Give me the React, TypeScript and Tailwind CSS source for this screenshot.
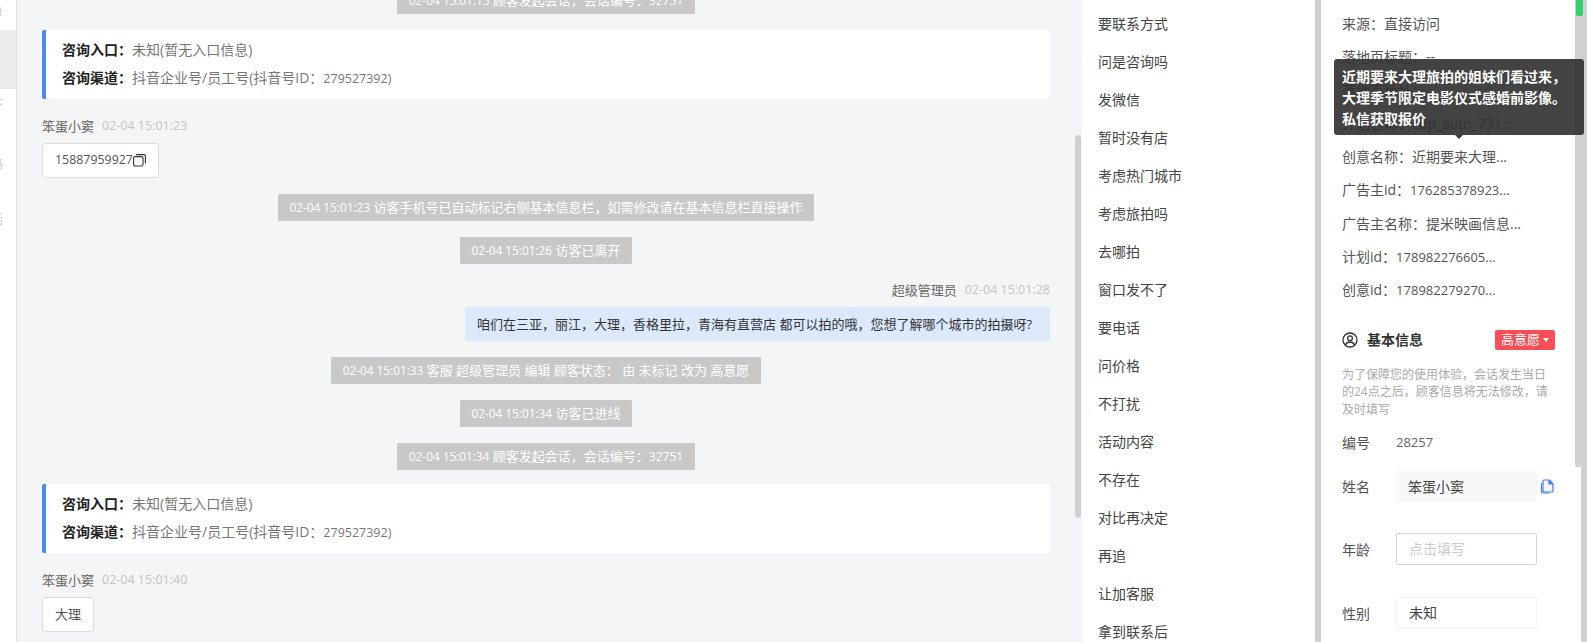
const font = "font-['Open_Sans','Noto_Sans_CJK_SC',sans-serif]";

function Sys({ time, children, last }: { time: string; children: React.ReactNode; last?: boolean }) {
  return (
    <div className={`flex justify-center ${last ? 'mb-[14px]' : 'mb-4'}`}>
      <div className="h-[27px] leading-[27px] px-3 bg-[#c8c8c8] text-white text-[13px] rounded-[1px] whitespace-nowrap">
        <span className="text-[11.8px]">{time}</span> {children}
      </div>
    </div>
  );
}

function Card() {
  return (
    <div className="h-[69px] mb-[17px] bg-white border-l-4 border-[#4d8af0] rounded-[2px] pl-[16px] pt-[6px] text-[14px] leading-[28px] text-[#777]">
      <div><span className="font-bold text-[#222]">咨询入口：</span>未知(暂无入口信息)</div>
      <div>
        <span className="font-bold text-[#222]">咨询渠道：</span>抖音企业号/员工号(抖音号ID：<span className="text-[12.5px]">279527392)</span>
      </div>
    </div>
  );
}

function Meta({ name, time, right }: { name: string; time: string; right?: boolean }) {
  return (
    <div className={`flex gap-2 text-[13px] h-[20px] leading-[20px] mb-[7px] ${right ? 'justify-end mb-[6px]' : ''}`}>
      <span className="text-[#666]">{name}</span>
      <span className="text-[#c4c4c4] text-[12.5px]">{time}</span>
    </div>
  );
}

function Bubble({ children }: { children: React.ReactNode }) {
  return (
    <div className="inline-flex items-center h-[35px] px-[12px] bg-white border border-[#dcdcdc] rounded-[3px] text-[13px] text-[#555]">{children}</div>
  );
}

const CopyIcon = () => (
  <svg width="13" height="13" viewBox="0 0 13 13" fill="none" stroke="#333" strokeWidth="1.1" className="shrink-0">
    <rect x="0.6" y="2.6" width="9.4" height="9.4" rx="1.5" />
    <path d="M3 .6h8a1.4 1.4 0 0 1 1.4 1.4v7.600" />
  </svg>
);

const words = ['要联系方式', '问是咨询吗', '发微信', '暂时没有店', '考虑热门城市', '考虑旅拍吗', '去哪拍', '窗口发不了', '要电话', '问价格', '不打扰', '活动内容', '不存在', '对比再决定', '再追', '让加客服', '拿到联系后'];

const info: [string, string, boolean?][] = [
  ['来源：', '直接访问'],
  ['落地页标题：', '--'],
  ['落地页地址：', '--'],
  ['计划名称：', 'cdp_auto_731...'],
  ['创意名称：', '近期要来大理...'],
  ['广告主id：', '176285378923...', true],
  ['广告主名称：', '提米映画信息...'],
  ['计划id：', '178982276605...', true],
  ['创意id：', '178982279270...', true],
];

const labelCls = 'w-[54px] text-[#555]';
const fieldCls = 'w-[141px] pl-3 rounded-[2px]';

export default function App() {
  return (
    <div className={`relative h-[642px] w-[1587px] flex overflow-hidden bg-white ${font}`}>
      {/* left rail */}
      <div className="w-[17px] shrink-0 bg-white border-r border-[#dfe1e5] overflow-hidden">
        <div className="h-[30px] leading-[26px] text-[12px] text-[#ccc] -ml-[9px]">单</div>
        <div className="h-[59px] bg-[#ececec]" />
        <div className="h-[32px] leading-[32px] text-[12px] text-[#ccc] -ml-[9px]">下</div>
        <div className="h-[88px] leading-[88px] text-[12px] text-[#ccc] -ml-[9px]">码</div>
        <div className="h-[22px] leading-[22px] text-[12px] text-[#ccc] -ml-[9px]">话</div>
      </div>

      {/* chat */}
      <div className="relative w-[1065px] shrink-0 bg-[#f4f5f7] overflow-hidden">
        <div className="pl-[25px] w-[1033px] -mt-[13px]">
          <Sys time="02-04 15:01:15">顾客发起会话，会话编号：<span className="text-[12px]">32751</span></Sys>
          <Card />
          <Meta name="笨蛋小窦" time="02-04 15:01:23" />
          <div className="mb-[16px]">
            <Bubble>
              <span className="text-[12.4px]">15887959927</span>
              <CopyIcon />
            </Bubble>
          </div>
          <Sys time="02-04 15:01:23">访客手机号已自动标记右侧基本信息栏，如需修改请在基本信息栏直接操作</Sys>
          <Sys time="02-04 15:01:26">访客已离开</Sys>
          <Meta name="超级管理员" time="02-04 15:01:28" right />
          <div className="flex justify-end mb-4">
            <div className="h-[34px] leading-[34px] pl-3 pr-[18px] bg-[#dce9fd] rounded-[2px] text-[13px] text-[#333] whitespace-nowrap">咱们在三亚，丽江，大理，香格里拉，青海有直营店 都可以拍的哦，您想了解哪个城市的拍摄呀?</div>
          </div>
          <Sys time="02-04 15:01:33">客服 超级管理员 编辑 顾客状态： 由 未标记 改为 高意愿</Sys>
          <Sys time="02-04 15:01:34">访客已进线</Sys>
          <Sys time="02-04 15:01:34" last>顾客发起会话，会话编号：<span className="text-[12px]">32751</span></Sys>
          <Card />
          <Meta name="笨蛋小窦" time="02-04 15:01:40" />
          <Bubble>大理</Bubble>
        </div>
        <div className="absolute left-[1058px] top-[135px] w-[6px] h-[383px] rounded-[3px] bg-[#d0d0d0]" />
      </div>

      {/* quick words */}
      <div className="w-[233px] shrink-0 bg-white pt-[5px] pl-[16px]">
        {words.map((w) => (
          <div key={w} className="h-[38px] leading-[38px] text-[14px] text-[#444] whitespace-nowrap">{w}</div>
        ))}
      </div>

      <div className="w-[6px] shrink-0 bg-[#d0d0d0]" />

      {/* info */}
      <div className="relative w-[254px] shrink-0 bg-white pl-[21px] text-[14px] text-[#555]">
        <div className="pt-[7px]">
          {info.map(([a, b, num]) => (
            <div key={a} className="h-[33.25px] leading-[33px] whitespace-nowrap">
              {a}
              <span className={num ? 'text-[13px]' : ''}>{b}</span>
            </div>
          ))}
        </div>
        <div className="mt-[22.5px] w-[213px] flex items-center justify-between h-[22px]">
          <div className="flex items-center gap-[9px] font-bold text-[14px] text-[#333]">
            <svg width="16" height="16" viewBox="0 0 16 16" fill="none" stroke="#333" strokeWidth="1.3">
              <circle cx="8" cy="8" r="7" />
              <circle cx="8" cy="6.200" r="2.400" />
              <path d="M3.400 13c.8-2 2.600-3 4.600-3s3.800 1 4.600 3" />
            </svg>
            基本信息
          </div>
          <div className="h-[20px] w-[60px] flex items-center justify-center gap-[3px] rounded-[2px] bg-[#f74e57] text-white text-[13px]">
            高意愿
            <span className="w-0 h-0 border-x-[3px] border-x-transparent border-t-[4px] border-t-white" />
          </div>
        </div>
        <div className="mt-[15px] w-[208px] text-[12px] leading-[17.5px] text-[#aaa]">为了保障您的使用体验，会话发生当日的24点之后，顾客信息将无法修改，请及时填写</div>
        <div className="mt-[14px] flex items-center h-[20px]">
          <span className={labelCls}>编号</span>
          <span className="text-[13px] text-[#666]">28257</span>
        </div>
        <div className="mt-[19px] flex items-center h-[31px]">
          <span className={labelCls}>姓名</span>
          <div className={`${fieldCls} h-[31px] leading-[31px] bg-[#f8f8f8] text-[#444]`}>笨蛋小窦</div>
          <svg width="14" height="15" viewBox="0 0 14 15" fill="none" stroke="#4d7ff0" strokeWidth="1.200" className="ml-[3px]">
            <path d="M1.500 4v9a1 1 0 0 0 1 1h7" />
            <path d="M4 1h5.500l3.500 3.500V12a1 1 0 0 1-1 1H4a1 1 0 0 1-1-1V2a1 1 0 0 1 1-1z" fill="#f2f6ff" />
            <path d="M9 1v4h4" fill="#4d7ff0" />
          </svg>
        </div>
        <div className="mt-[31px] flex items-center h-[32px]">
          <span className={labelCls}>年龄</span>
          <div className={`${fieldCls} h-[32px] leading-[30px] border border-[#d5d5d5] text-[#ccc]`}>点击填写</div>
        </div>
        <div className="mt-[32px] flex items-center h-[32px]">
          <span className={labelCls}>性别</span>
          <div className={`${fieldCls} h-[32px] leading-[30px] border border-[#f6f6f6] text-[#444]`}>未知</div>
        </div>

        {/* tooltip */}
        <div className="absolute left-[13px] top-[59px] w-[250px] h-[76px] z-10 bg-[#2f2f2f]/90 rounded-[3px] pl-2 pt-[7px] text-white font-bold text-[14px] leading-[21px]">
          <div className="whitespace-nowrap">近期要来大理旅拍的姐妹们看过来，</div>
          <div className="whitespace-nowrap">大理季节限定电影仪式感婚前影像。</div>
          <div className="whitespace-nowrap">私信获取报价</div>
          <span className="absolute left-[121px] -bottom-[4px] w-0 h-0 border-x-[4px] border-x-transparent border-t-[4px] border-t-[#3b3b3b]" />
        </div>
      </div>

      {/* page scrollbars */}
      <div className="flex-1 flex">
        <div className="w-[6px] h-[467px] bg-[#d0d0d0] rounded-b-[2px]" />
        <div className="w-[6px] h-[642px] bg-[#d0d0d0]" />
      </div>
      <div className="absolute left-[1576px] top-0 w-[7px] h-[16px] bg-[#34d16b] rounded-b-[2px]" />
    </div>
  );
}
